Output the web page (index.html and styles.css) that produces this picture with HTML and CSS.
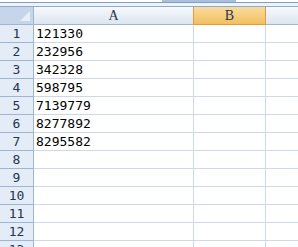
FILE: index.html
```html
<!DOCTYPE html>
<html lang="zh">
<head>
  <meta charset="UTF-8">
  <title>Sheet1</title>
  <link rel="stylesheet" href="styles.css">
</head>
<body>

  <!-- Barra superior -->
  <div class="top">
    <div class="top-white"><span class="tab"></span></div>
    <div class="top-line"></div>
    <div class="top-band"></div>
  </div>

  <!-- Hoja -->
  <div class="sheet">
    <div class="corner"><span class="tri"></span></div>
    <div class="col-head">A</div>
    <div class="col-head sel">B</div>
    <div class="col-head last"></div>

    <div class="row-head">1</div><div class="cell">121330</div><div class="cell"></div><div class="cell last"></div>
    <div class="row-head">2</div><div class="cell">232956</div><div class="cell"></div><div class="cell last"></div>
    <div class="row-head">3</div><div class="cell">342328</div><div class="cell"></div><div class="cell last"></div>
    <div class="row-head">4</div><div class="cell">598795</div><div class="cell"></div><div class="cell last"></div>
    <div class="row-head">5</div><div class="cell">7139779</div><div class="cell"></div><div class="cell last"></div>
    <div class="row-head">6</div><div class="cell">8277892</div><div class="cell"></div><div class="cell last"></div>
    <div class="row-head">7</div><div class="cell">8295582</div><div class="cell"></div><div class="cell last"></div>
    <div class="row-head">8</div><div class="cell"></div><div class="cell"></div><div class="cell last"></div>
    <div class="row-head">9</div><div class="cell"></div><div class="cell"></div><div class="cell last"></div>
    <div class="row-head">10</div><div class="cell"></div><div class="cell"></div><div class="cell last"></div>
    <div class="row-head">11</div><div class="cell"></div><div class="cell"></div><div class="cell last"></div>
    <div class="row-head">12</div><div class="cell"></div><div class="cell"></div><div class="cell last"></div>
    <div class="row-head">13</div><div class="cell"></div><div class="cell"></div><div class="cell last"></div>
  </div>

</body>
</html>
```

FILE: styles.css
```css
body {
  margin: 0;
  width: 298px;
  height: 247px;
  overflow: hidden;
  background: #fff;
  font-family: "DejaVu Sans Mono", "Liberation Mono", monospace;
  font-size: 13px;
}

/* Barra superior */
.top-white {
  height: 2px;
  background: #fff;
  position: relative;
}

.tab {
  position: absolute;
  left: 162px;
  top: 0;
  width: 74px;
  height: 2px;
  background: #a9c0df;
}

.top-line {
  height: 1px;
  background: #7f9fc3;
}

.top-band {
  height: 3px;
  background: #eef3f9;
  border-bottom: 1px solid #8fabca;
}

/* Hoja */
.sheet {
  display: grid;
  grid-template-columns: 34px 160px 72px 40px;
  grid-auto-rows: 18px;
}

.sheet > div {
  box-sizing: border-box;
  overflow: hidden;
  white-space: nowrap;
}

.corner {
  background: #c6d5ea;
  border-right: 1px solid #9eb6ce;
  border-bottom: 1px solid #9eb6ce;
  position: relative;
}

.tri {
  position: absolute;
  right: 3px;
  bottom: 3px;
  width: 0;
  height: 0;
  border-left: 10px solid transparent;
  border-bottom: 10px solid #e8eef7;
}

.col-head {
  background: linear-gradient(#f6f9fc, #dde5ef);
  border-right: 1px solid #d3dce8;
  border-bottom: 1px solid #9eb6ce;
  color: #1f3550;
  font-family: "Liberation Serif", serif;
  font-size: 14px;
  text-align: center;
  line-height: 17px;
}

.col-head:nth-child(2) {
  border-right-color: #f29536;
}

.col-head.sel {
  background: linear-gradient(#f9da9e, #f1c15f);
  border-right-color: #f29536;
  border-bottom-color: #f29536;
}

.row-head {
  background: #e4ecf7;
  border-right: 1px solid #9eb6ce;
  border-bottom: 1px solid #9eb6ce;
  color: #1f3550;
  text-align: center;
  line-height: 18px;
}

.cell {
  border-right: 1px solid #d0d7e5;
  border-bottom: 1px solid #d0d7e5;
  color: #000;
  padding-left: 2px;
  line-height: 18px;
}

.last {
  border-right: none;
}
```
